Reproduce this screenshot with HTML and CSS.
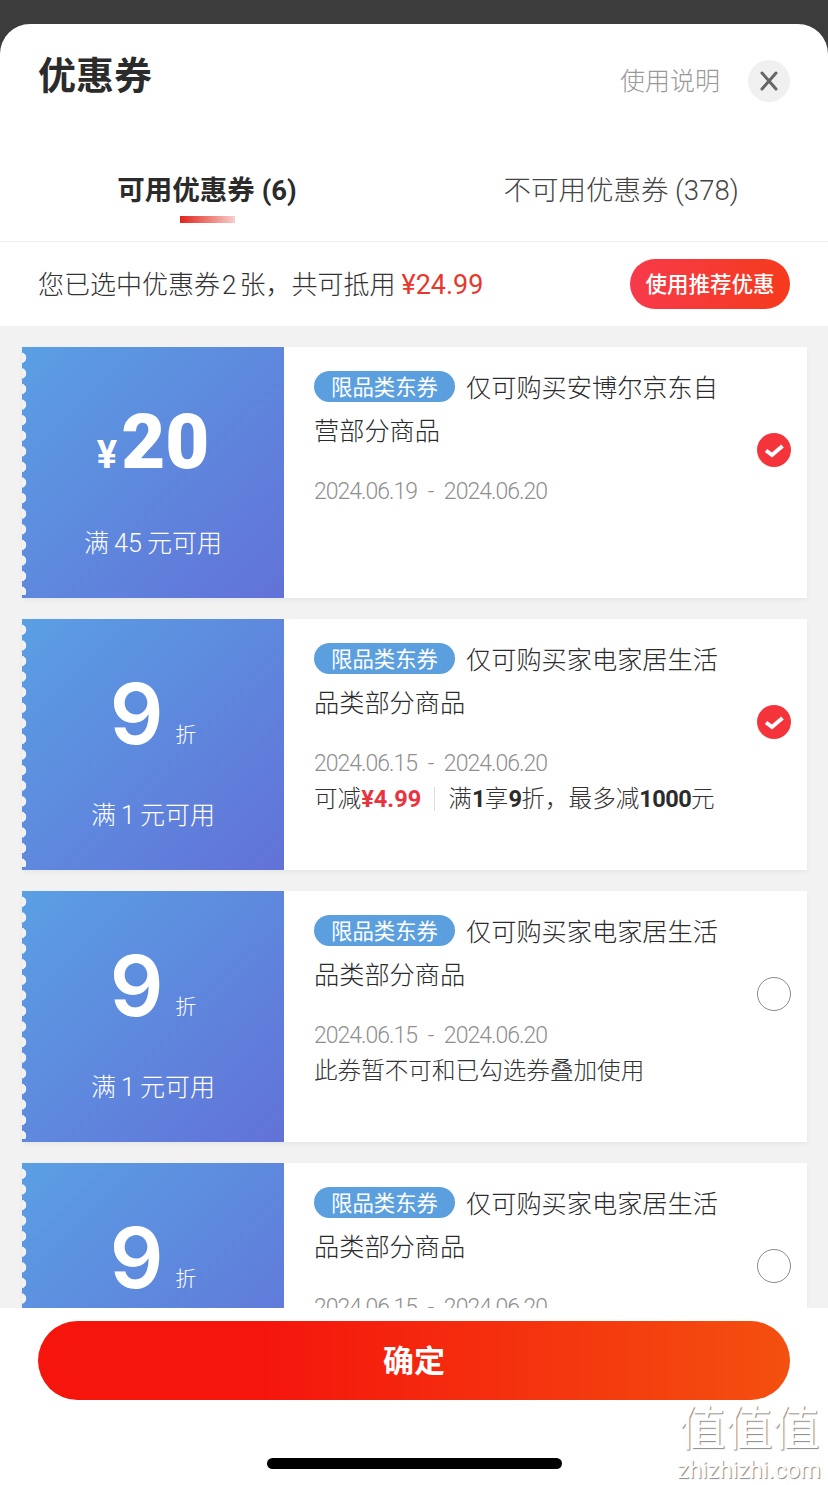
FILE: index.html
```html
<!DOCTYPE html>
<html lang="zh-CN">
<head>
  <meta charset="UTF-8">
  <title>优惠券</title>
  <link rel="stylesheet" href="styles.css">
</head>
<body>
  <div class="sheet">
    <header class="sheet-head">
      <h1>优惠券</h1>
      <a class="help">使用说明</a>
      <button class="close">
        <svg width="20" height="20" viewBox="0 0 20 20"><path d="M3 2 L17 18 M17 2 L3 18" stroke="#666" stroke-width="3" stroke-linecap="round"/></svg>
      </button>
    </header>

    <nav class="tabs">
      <div class="tab active">可用优惠券 (6)</div>
      <div class="tab">不可用优惠券 (378)</div>
    </nav>

    <div class="summary">
      <p>您已选中优惠券<span class="count">2</span>张，共可抵用<span class="red">¥24.99</span></p>
      <button class="recommend">使用推荐优惠</button>
    </div>

    <section class="list">
      <div class="coupon">
        <div class="coupon-left">
          <div class="amount"><span class="yen">¥</span><span class="big">20</span></div>
          <div class="cond">满 45 元可用</div>
        </div>
        <div class="coupon-body">
          <div class="title"><span class="tag">限品类东券</span>仅可购买安博尔京东自营部分商品</div>
          <div class="date">2024.06.19 - 2024.06.20</div>
        </div>
        <svg class="check" width="34" height="34" viewBox="0 0 34 34"><circle cx="17" cy="17" r="17" fill="#f5333a"/><path d="M9 17.5 L15 22 L25.5 13" fill="none" stroke="#fff" stroke-width="4"/></svg>
      </div>

      <div class="coupon">
        <div class="coupon-left">
          <div class="amount"><span class="nine">9</span><span class="zhe">折</span></div>
          <div class="cond">满 1 元可用</div>
        </div>
        <div class="coupon-body">
          <div class="title"><span class="tag">限品类东券</span>仅可购买家电家居生活品类部分商品</div>
          <div class="date">2024.06.15 - 2024.06.20</div>
          <div class="note">可减<b class="red">¥4.99</b><i class="sep"></i>满<b>1</b>享<b>9</b>折，最多减<b>1000</b>元</div>
        </div>
        <svg class="check" width="34" height="34" viewBox="0 0 34 34"><circle cx="17" cy="17" r="17" fill="#f5333a"/><path d="M9 17.5 L15 22 L25.5 13" fill="none" stroke="#fff" stroke-width="4"/></svg>
      </div>

      <div class="coupon">
        <div class="coupon-left">
          <div class="amount"><span class="nine">9</span><span class="zhe">折</span></div>
          <div class="cond">满 1 元可用</div>
        </div>
        <div class="coupon-body">
          <div class="title"><span class="tag">限品类东券</span>仅可购买家电家居生活品类部分商品</div>
          <div class="date">2024.06.15 - 2024.06.20</div>
          <div class="note">此券暂不可和已勾选券叠加使用</div>
        </div>
        <span class="check empty"></span>
      </div>

      <div class="coupon">
        <div class="coupon-left">
          <div class="amount"><span class="nine">9</span><span class="zhe">折</span></div>
          <div class="cond">满 1 元可用</div>
        </div>
        <div class="coupon-body">
          <div class="title"><span class="tag">限品类东券</span>仅可购买家电家居生活品类部分商品</div>
          <div class="date">2024.06.15 - 2024.06.20</div>
        </div>
        <span class="check empty"></span>
      </div>
    </section>

    <footer class="foot">
      <button class="confirm">确定</button>
      <div class="home-bar"></div>
    </footer>
  </div>

  <div class="watermark">
    <div class="wm-big">值值值</div>
    <div class="wm-small">zhizhizhi.com</div>
  </div>
</body>
</html>
```

FILE: styles.css
```css
* { box-sizing: border-box; }
html, body { margin: 0; height: 100%; }
body {
  width: 828px;
  height: 1485px;
  overflow: hidden;
  padding-top: 24px;
  background: #3c3c3c;
  color: #2b2b2b;
  font-family: Roboto, "Noto Sans CJK SC", sans-serif;
  position: relative;
}
button { border: none; padding: 0; font-family: inherit; }

.sheet {
  height: 1461px;
  background: #fff;
  border-radius: 30px 30px 0 0;
  display: flex;
  flex-direction: column;
  overflow: hidden;
}

.sheet-head {
  height: 126px;
  display: flex;
  align-items: flex-start;
  padding: 29px 38px 0 38px;
}
.sheet-head h1 {
  margin: 0;
  flex: 1;
  font-size: 38px;
  line-height: 46px;
  font-weight: 700;
}
.help {
  color: #999;
  font-size: 25px;
  line-height: 36px;
  margin-top: 11px;
  font-weight: 300;
}
.close {
  width: 42px;
  height: 42px;
  margin: 7px 0 0 28px;
  border-radius: 50%;
  background: #f0f0f0;
  display: flex;
  align-items: center;
  justify-content: center;
}

.tabs {
  height: 92px;
  display: flex;
  border-bottom: 1px solid #f0f0f0;
}
.tab {
  flex: 1;
  text-align: center;
  font-size: 27.5px;
  line-height: 40px;
  padding-top: 21px;
  color: #444;
  font-weight: 300;
  position: relative;
}
.tab.active { color: #2b2b2b; font-weight: 700; }
.tab.active::after {
  content: "";
  position: absolute;
  left: 180px;
  top: 66px;
  width: 55px;
  height: 7px;
  background: linear-gradient(90deg, #e0241b, #f7cfcb);
}

.summary {
  height: 84px;
  display: flex;
  align-items: center;
  justify-content: space-between;
  padding: 0 38px;
}
.summary p { margin: 0 0 4px; font-size: 26px; color: #333; font-weight: 300; }
.count { margin: 0 3px 0 2px; }
.red { color: #e8372c; }
.summary .red { font-weight: 400; font-size: 27px; margin-left: 6px; }
.recommend {
  width: 160px;
  height: 50px;
  padding-bottom: 4px;
  border-radius: 25px;
  color: #fff;
  font-size: 21.5px;
  font-weight: 500;
  background: linear-gradient(90deg, #f73a4a, #f53a1c);
}

.list {
  flex: 1;
  min-height: 0;
  overflow: hidden;
  background: #f2f2f2;
  padding: 21px 21px 0 22px;
  display: flex;
  flex-direction: column;
  gap: 21px;
}
.coupon {
  flex: none;
  height: 251px;
  display: flex;
  background: #fff;
  box-shadow: 0 2px 4px rgba(0, 0, 0, 0.05);
}
.coupon-left {
  flex: none;
  width: 262px;
  position: relative;
  color: #fff;
  text-align: center;
  background: linear-gradient(135deg, #5a9fe3, #6272d8);
}
/* scalloped left edge */
.coupon-left::before {
  content: "";
  position: absolute;
  left: 0;
  top: 3px;
  bottom: 3px;
  width: 5px;
  background: radial-gradient(circle at -1px 50%, #f2f2f2 5px, transparent 5.6px) 0 0 / 5px 15.6px repeat-y;
}
.amount {
  height: 147px;
  padding-top: 50px;
  display: flex;
  align-items: baseline;
  justify-content: center;
}
.yen { font-size: 38px; font-weight: 700; margin-right: 4px; }
.big { font-size: 76px; line-height: 90px; font-weight: 900; }
.nine { font-family: Inter, Roboto, sans-serif; font-size: 84px; line-height: 90px; font-weight: 600; }
.zhe { font-size: 21px; margin: 0 0 2px 12px; font-weight: 300; position: relative; top: -2px; }
.cond {
  margin-top: 32px;
  font-size: 25px;
  line-height: 36px;
  font-weight: 300;
  word-spacing: -1px;
}

.coupon-body {
  flex: 1;
  min-width: 0;
  padding: 20px 0 0 30px;
}
.title {
  font-size: 25.2px;
  line-height: 43px;
  font-weight: 300;
  color: #2b2b2b;
  width: 410px;
}
.tag {
  display: inline-block;
  width: 141px;
  height: 31px;
  margin-right: 11px;
  border-radius: 16px;
  background: #5b9fdf;
  color: #fff;
  font-size: 21.4px;
  line-height: 33px;
  font-weight: 400;
  text-align: center;
  vertical-align: 2px;
}
.date {
  margin-top: 24px;
  font-size: 23px;
  line-height: 30px;
  font-weight: 300;
  color: #8f8f8f;
  letter-spacing: -1px;
  word-spacing: 6px;
}
.note {
  margin-top: 4px;
  font-size: 23.6px;
  line-height: 32px;
  font-weight: 300;
  color: #333;
  display: flex;
  align-items: center;
}
.note b { font-weight: 700; color: #2b2b2b; letter-spacing: -0.6px; }
.note b.red { color: #ea3340; letter-spacing: 0; }
.sep {
  width: 1px;
  height: 24px;
  margin: 0 13px;
  background: #ddd;
}
.check {
  flex: none;
  margin: 86px 16px 0 0;
  width: 34px;
  height: 34px;
}
.check.empty {
  border: 1px solid #8a8a8a;
  border-radius: 50%;
  background: #fff;
}

.foot {
  flex: none;
  height: 177px;
  background: #fff;
  padding: 13px 38px 0;
  position: relative;
}
.confirm {
  display: block;
  width: 752px;
  height: 79px;
  padding-bottom: 4px;
  border-radius: 40px;
  color: #fff;
  font-size: 31px;
  font-weight: 700;
  background: linear-gradient(90deg, #f5150d 30%, #f4500f);
}
.home-bar {
  width: 295px;
  height: 11px;
  margin: 58px auto 0 229px;
  border-radius: 6px;
  background: #000;
}

.watermark {
  position: absolute;
  left: 677px;
  top: 1401px;
  width: 144px;
  color: #fff;
  text-align: center;
  text-shadow: 1px 1px 1px #888;
}
.wm-big {
  font-size: 47px;
  line-height: 56px;
  font-weight: 400;
}
.wm-small {
  font-size: 23.5px;
  line-height: 26px;
  font-weight: 400;
}
```
